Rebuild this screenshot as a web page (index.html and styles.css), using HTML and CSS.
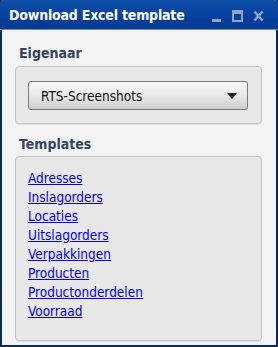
FILE: index.html
```html
<!DOCTYPE html>
<html>
<head>
<meta charset="utf-8">
<link rel="stylesheet" href="styles.css">
</head>
<body>
<div class="window">
  <div class="titlebar">
    <span class="title">Download Excel template</span>
    <div class="controls">
      <svg class="ctl" width="10" height="12" viewBox="0 0 10 12"><rect x="0" y="9" width="9" height="3" fill="#8ea5c9"/></svg>
      <svg class="ctl" width="11" height="12" viewBox="0 0 11 12"><rect x="1" y="1" width="9" height="10" fill="none" stroke="#8ea5c9" stroke-width="2"/><rect x="1" y="1" width="9" height="3" fill="#8ea5c9"/></svg>
      <svg class="ctl" width="11" height="12" viewBox="0 0 11 12"><path d="M1.5 1.5 L9.5 10.5 M9.5 1.5 L1.5 10.5" stroke="#8ea5c9" stroke-width="2.6"/></svg>
    </div>
  </div>
  <div class="body">
    <div class="label">Eigenaar</div>
    <div class="panel panel-owner">
      <div class="select">
        <span>RTS-Screenshots</span>
        <svg width="10" height="6" viewBox="0 0 10 6"><path d="M0 0 H10 L5 6 Z" fill="#222"/></svg>
      </div>
    </div>
    <div class="label">Templates</div>
    <div class="panel panel-links">
      <a href="#">Adresses</a>
      <a href="#">Inslagorders</a>
      <a href="#">Locaties</a>
      <a href="#">Uitslagorders</a>
      <a href="#">Verpakkingen</a>
      <a href="#">Producten</a>
      <a href="#">Productonderdelen</a>
      <a href="#">Voorraad</a>
    </div>
  </div>
</div>
</body>
</html>
```

FILE: styles.css
```css
html, body {
  margin: 0;
  padding: 0;
  background: #ffffff;
}
body {
  font-family: "DejaVu Sans Condensed", "DejaVu Sans", Verdana, sans-serif;
}
.window {
  width: 278px;
  height: 347px;
  box-sizing: border-box;
  border: 2px solid #0c2a58;
  border-top: none;
  display: flex;
  flex-direction: column;
  background: #f3f3f3;
}
.titlebar {
  height: 30px;
  margin: 0 -2px;
  padding: 0 14px 0 9px;
  border-radius: 4px 4px 0 0;
  background: linear-gradient(#0c4ea6, #0842a0 50%, #033a92);
  border-bottom: 1px solid #7d8aa0;
  display: flex;
  align-items: center;
  justify-content: space-between;
  box-sizing: border-box;
}
.title {
  color: #ffffff;
  font-weight: bold;
  font-size: 14px;
  letter-spacing: -0.2px;
  margin-top: 1px;
}
.controls {
  display: flex;
  gap: 10px;
  align-items: center;
  margin-top: 2px;
}
.ctl {
  display: block;
}
.body {
  padding: 13px 14px 0 13px;
  display: flex;
  flex-direction: column;
}
.label {
  color: #34455f;
  font-weight: bold;
  font-size: 14px;
  padding-left: 4px;
  height: 20px;
  line-height: 20px;
}
.panel {
  border: 1px solid #c4c4c4;
  border-radius: 4px;
  background: #e8e8e8;
  box-shadow: 0 1px 1px rgba(0,0,0,0.08);
}
.panel-owner {
  margin-top: 3px;
  padding: 14px 13px 13px 12px;
  margin-bottom: 10px;
}
.select {
  height: 29px;
  box-sizing: border-box;
  border: 1px solid #7a7a7a;
  border-radius: 3px;
  background: linear-gradient(#f8f8f8, #eaeaea 45%, #cfcfcf);
  display: flex;
  align-items: center;
  justify-content: space-between;
  padding: 0 10px 0 12px;
  font-size: 13.5px;
  color: #111;
}
.panel-links {
  margin-top: 2px;
  padding: 12px 12px 19px 12px;
  display: flex;
  flex-direction: column;
  align-items: flex-start;
}
.panel-links a {
  color: #0000ee;
  font-size: 13.5px;
  line-height: 19px;
  text-decoration: underline;
}
```
